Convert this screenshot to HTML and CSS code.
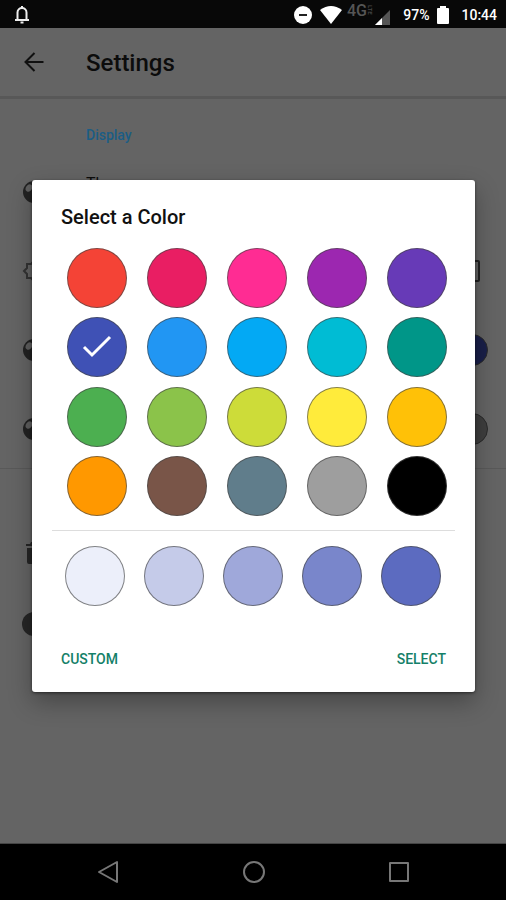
FILE: index.html
```html
<!DOCTYPE html>
<html lang="en">
<head>
<meta charset="utf-8">
<meta name="viewport" content="width=device-width, initial-scale=1">
<title>Settings</title>
<link rel="stylesheet" href="styles.css">
</head>
<body>
<div class="screen">
  <header class="status">
    <svg class="bell" width="16" height="20" viewBox="0 0 16 20" fill="none" stroke="#eee" stroke-width="2"><path d="M3.5 14V7.500C3.500 1.500 12.500 1.500 12.500 7.500V14"/><path d="M1 15h14"/><path d="M8 1v2M6.500 17.500h3"/></svg>
    <svg width="18" height="18" viewBox="0 0 18 18"><circle cx="9" cy="9" r="9" fill="#fff"/><path d="M5 9h8" stroke="#222" stroke-width="2"/></svg>
    <svg class="wifi" width="22" height="18" viewBox="0 0 22 18"><path d="M0 4Q11-4 22 4L11 18z" fill="#fff"/></svg>
    <svg class="signal" width="44" height="24" viewBox="0 0 44 24"><text class="net" x="0" y="14">4G</text><text class="lte" transform="translate(21 3) rotate(90)">LTE</text><path d="M43 8v15H28z" fill="#555"/><path d="M35 16v7h-7z" fill="#fff"/></svg>
    <span class="percent">97%</span>
    <svg class="battery" width="12" height="18" viewBox="0 0 12 18"><path d="M3 0h6v2h2q1 0 1 1v14q0 1-1 1H1q-1 0-1-1V3q0-1 1-1h2z" fill="#fff"/></svg>
    <time class="clock">10:44</time>
  </header>

  <main class="page">
    <div class="appbar">
      <button class="back" type="button" aria-label="Back"><svg width="20" height="20" viewBox="0 0 20 20" fill="none" stroke="#101010" stroke-width="2"><path d="M19.500 10H2M10.500 1L1.500 10l9 9"/></svg></button>
      <h1>Settings</h1>
    </div>
    <section class="group">
      <h2>Display</h2>
      <div class="row"><svg class="icon" viewBox="0 0 24 24"><circle cx="12" cy="12" r="11" fill="#222"/><ellipse cx="7" cy="8" rx="3" ry="4" transform="rotate(35 7 8)" fill="#606060"/></svg><span class="name">Theme</span></div>
      <div class="row"><svg class="icon" viewBox="0 0 24 24"><path d="M12 2l3 3h4v4l3 3-3 3v4h-4l-3 3-3-3H5v-4l-3-3 3-3V5h4z" fill="none" stroke="#333" stroke-width="2"/></svg><span class="box"></span></div>
      <div class="row"><svg class="icon" viewBox="0 0 24 24"><circle cx="12" cy="12" r="11" fill="#222"/><ellipse cx="7" cy="8" rx="3" ry="4" transform="rotate(35 7 8)" fill="#606060"/></svg><span class="dot navy"></span></div>
      <div class="row"><svg class="icon" viewBox="0 0 24 24"><circle cx="12" cy="12" r="11" fill="#222"/><ellipse cx="7" cy="8" rx="3" ry="4" transform="rotate(35 7 8)" fill="#606060"/></svg><span class="dot dim"></span></div>
    </section>
    <section class="group data">
      <div class="row"><svg class="icon" viewBox="0 0 24 24"><path d="M4 2h4l1-2h6l1 2h4v2H4zM5 6h14v14q0 2-2 2H7q-2 0-2-2z" fill="#262626"/></svg></div>
      <div class="row short"><svg class="icon" viewBox="0 0 24 24"><circle cx="12" cy="12" r="12" fill="#262626"/></svg></div>
    </section>

    <div class="overlay">
      <form class="dialog" role="dialog" aria-labelledby="dialog-title">
        <h2 id="dialog-title">Select a Color</h2>
        <div class="colors">
          <label class="swatch red"><input type="radio" name="color" aria-label="Red"></label>
          <label class="swatch crimson"><input type="radio" name="color" aria-label="Crimson"></label>
          <label class="swatch pink"><input type="radio" name="color" aria-label="Pink"></label>
          <label class="swatch purple"><input type="radio" name="color" aria-label="Purple"></label>
          <label class="swatch violet"><input type="radio" name="color" aria-label="Deep purple"></label>
          <label class="swatch indigo"><input type="radio" name="color" aria-label="Indigo" checked><svg class="check" width="30" height="24" viewBox="0 0 30 24"><path d="M2 12l8 8L28 2" fill="none" stroke="#fff" stroke-width="3"/></svg></label>
          <label class="swatch blue"><input type="radio" name="color" aria-label="Blue"></label>
          <label class="swatch sky"><input type="radio" name="color" aria-label="Light blue"></label>
          <label class="swatch cyan"><input type="radio" name="color" aria-label="Cyan"></label>
          <label class="swatch teal"><input type="radio" name="color" aria-label="Teal"></label>
          <label class="swatch green"><input type="radio" name="color" aria-label="Green"></label>
          <label class="swatch leaf"><input type="radio" name="color" aria-label="Light green"></label>
          <label class="swatch lime"><input type="radio" name="color" aria-label="Lime"></label>
          <label class="swatch yellow"><input type="radio" name="color" aria-label="Yellow"></label>
          <label class="swatch amber"><input type="radio" name="color" aria-label="Amber"></label>
          <label class="swatch orange"><input type="radio" name="color" aria-label="Orange"></label>
          <label class="swatch brown"><input type="radio" name="color" aria-label="Brown"></label>
          <label class="swatch slate"><input type="radio" name="color" aria-label="Blue grey"></label>
          <label class="swatch grey"><input type="radio" name="color" aria-label="Grey"></label>
          <label class="swatch black"><input type="radio" name="color" aria-label="Black"></label>
        </div>
        <div class="shades">
          <label class="swatch shade1"><input type="radio" name="shade" aria-label="Shade 50"></label>
          <label class="swatch shade2"><input type="radio" name="shade" aria-label="Shade 100"></label>
          <label class="swatch shade3"><input type="radio" name="shade" aria-label="Shade 200"></label>
          <label class="swatch shade4"><input type="radio" name="shade" aria-label="Shade 300"></label>
          <label class="swatch shade5"><input type="radio" name="shade" aria-label="Shade 400"></label>
        </div>
        <div class="actions">
          <button type="button">CUSTOM</button>
          <button type="button">SELECT</button>
        </div>
      </form>
    </div>
  </main>

  <nav class="navbar">
    <button type="button" aria-label="Back"><svg width="24" height="24" viewBox="0 0 24 24"><path d="M20 2v20L2 12z"/></svg></button>
    <button type="button" aria-label="Home"><svg width="24" height="24" viewBox="0 0 24 24"><circle cx="12" cy="12" r="10"/></svg></button>
    <button type="button" aria-label="Recent apps"><svg width="24" height="24" viewBox="0 0 24 24"><rect x="3" y="3" width="18" height="18"/></svg></button>
  </nav>
</div>
</body>
</html>
```
FILE: styles.css
```css
* { box-sizing: border-box; }
body {
  margin: 0;
  font-family: Roboto, "Liberation Sans", sans-serif;
  background: #646464;
}
svg { display: block; flex: none; }
h1, h2 { margin: 0; font-weight: 500; }
button { padding: 0; border: 0; background: none; font: inherit; }

.screen { display: flex; flex-direction: column; min-height: 100vh; }

.status {
  display: flex;
  align-items: center;
  height: 28px;
  padding: 2px 9px 0 14px;
  background: #080808;
  color: #fff;
  font-size: 14px;
  font-weight: 500;
}
.bell { margin-right: auto; }
.wifi { margin-left: 8px; }
.signal { margin-left: 5px; align-self: flex-start; overflow: visible; }
.net { font-size: 16px; font-weight: 500; fill: #555; }
.lte { font-size: 6px; font-weight: 700; fill: #484848; }
.percent { margin-left: 12px; }
.battery { margin-left: 8px; }
.clock { margin-left: 12px; }

.page { position: relative; flex: 1; background: #646464; border-bottom: 1px solid #444; }

.appbar {
  display: flex;
  align-items: center;
  height: 71px;
  padding: 0 24px;
  border-bottom: 3px solid #585858;
}
.back { width: 62px; }
.appbar h1 { padding-top: 2px; font-size: 24px; color: #0c0c0c; }

.group { border-bottom: 1px solid #595959; }
.group h2 {
  height: 53px;
  padding: 27px 86px 0;
  font-size: 14px;
  line-height: 18px;
  color: #1b5d85;
}
.row {
  display: flex;
  align-items: center;
  justify-content: space-between;
  height: 79px;
  padding: 0 18px 0 22px;
}
.icon { width: 24px; height: 24px; }
.name {
  align-self: flex-start;
  flex: 1;
  padding: 22px 0 0 40px;
  font-size: 16px;
  line-height: 20px;
  color: #0c0c0c;
}
.box { width: 22px; height: 22px; margin-right: 8px; border: 2px solid #222; border-radius: 2px; }
.dot { width: 32px; height: 32px; border-radius: 50%; border: 1px solid #2a2a2a; }
.navy { background: #191f49; }
.dim { background: #3e3e3e; }
.data { padding-top: 45px; border-bottom: 0; }
.short { height: 62px; }

.overlay {
  position: absolute;
  inset: 0;
  display: flex;
  align-items: center;
  padding: 0 31px 0 32px;
}
.dialog {
  flex: 1;
  border-radius: 3px;
  padding: 25px 20px 20px;
  background: #fff;
  box-shadow: 0 10px 24px rgba(0, 0, 0, .3), 0 1px 3px rgba(0, 0, 0, .5);
}
.dialog h2 {
  padding-left: 9px;
  font-size: 20px;
  line-height: 24px;
  color: #111;
}
.colors {
  display: grid;
  grid-template-columns: repeat(5, 60px);
  justify-content: space-between;
  align-content: space-between;
  height: 269px;
  margin-top: 19px;
  padding: 0 8px 0 15px;
}
.shades {
  display: flex;
  justify-content: space-between;
  margin-top: 13px;
  padding: 15px 14px 0 13px;
  border-top: 1px solid #ddd;
}
.swatch { display: grid; place-items: center; width: 60px; height: 60px; }
.swatch > * { grid-area: 1 / 1; }
.swatch input {
  appearance: none;
  width: 60px;
  height: 60px;
  margin: 0;
  border: 1px solid rgba(70, 70, 70, .65);
  border-radius: 50%;
  background: var(--color);
}
.check { pointer-events: none; z-index: 1; }

.red { --color: #f44336; }
.crimson { --color: #e91e63; }
.pink { --color: #ff2c93; }
.purple { --color: #9c27b0; }
.violet { --color: #673ab7; }
.indigo { --color: #3f51b5; }
.blue { --color: #2196f3; }
.sky { --color: #03a9f4; }
.cyan { --color: #00bcd4; }
.teal { --color: #009688; }
.green { --color: #4caf50; }
.leaf { --color: #8bc34a; }
.lime { --color: #cddc39; }
.yellow { --color: #ffeb3b; }
.amber { --color: #ffc107; }
.orange { --color: #ff9800; }
.brown { --color: #795548; }
.slate { --color: #607d8b; }
.grey { --color: #9e9e9e; }
.black { --color: #000; }
.shade1 { --color: #eceffa; }
.shade2 { --color: #c5cbe9; }
.shade3 { --color: #9fa8da; }
.shade4 { --color: #7986cb; }
.shade5 { --color: #5c6bc0; }

.actions {
  display: flex;
  justify-content: space-between;
  margin-top: 40px;
  padding: 0 9px;
}
.actions button {
  height: 26px;
  font-size: 14px;
  font-weight: 500;
  color: #148068;
}

.navbar {
  display: flex;
  justify-content: space-between;
  align-items: center;
  height: 56px;
  padding: 0 95px 0 97px;
  background: #000;
}
.navbar svg { fill: none; stroke: #777; stroke-width: 2; stroke-linejoin: round; }
```
